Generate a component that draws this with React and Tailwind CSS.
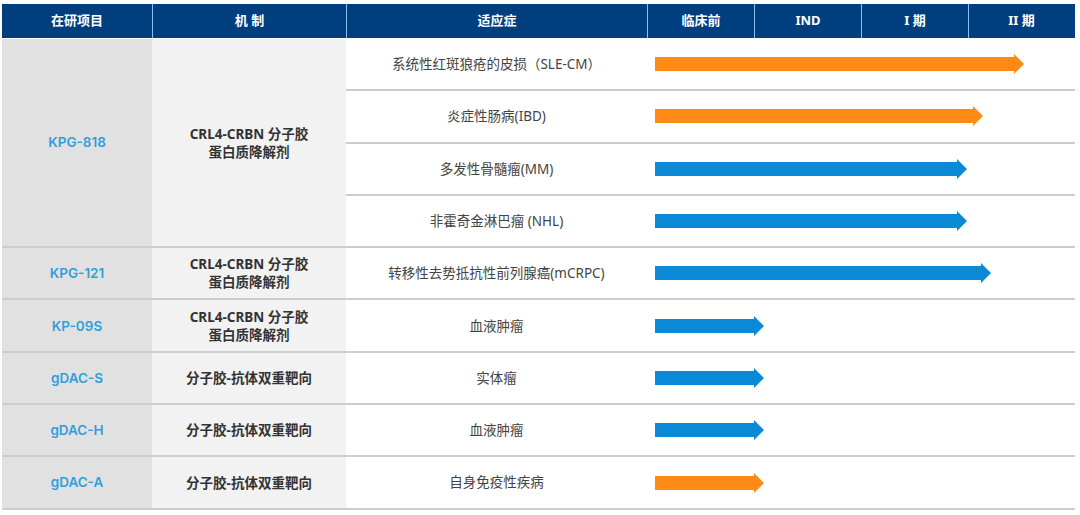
import React from 'react';

const ORANGE = '#fc8a14';
const BLUE = '#0a8ad6';

const rows = [
  { text: '系统性红斑狼疮的皮损（SLE-CM）', len: 369, color: ORANGE },
  { text: '炎症性肠病(IBD)', len: 328, color: ORANGE },
  { text: '多发性骨髓瘤(MM)', len: 312, color: BLUE },
  { text: '非霍奇金淋巴瘤 (NHL)', len: 312, color: BLUE },
  { text: '转移性去势抵抗性前列腺癌(mCRPC)', len: 336, color: BLUE },
  { text: '血液肿瘤', len: 109, color: BLUE },
  { text: '实体瘤', len: 109, color: BLUE },
  { text: '血液肿瘤', len: 109, color: BLUE },
  { text: '自身免疫性疾病', len: 109, color: ORANGE },
];

const projects = [
  { name: 'KPG-818', mech: ['CRL4-CRBN 分子胶', '蛋白质降解剂'], span: 4 },
  { name: 'KPG-121', mech: ['CRL4-CRBN 分子胶', '蛋白质降解剂'], span: 1 },
  { name: 'KP-09S', mech: ['CRL4-CRBN 分子胶', '蛋白质降解剂'], span: 1 },
  { name: 'gDAC-S', mech: ['分子胶-抗体双重靶向'], span: 1 },
  { name: 'gDAC-H', mech: ['分子胶-抗体双重靶向'], span: 1 },
  { name: 'gDAC-A', mech: ['分子胶-抗体双重靶向'], span: 1 },
];

const headers = ['在研项目', '机 制', '适应症', '临床前', 'IND', 'I 期', 'II 期'];

const Arrow = ({ len, color }) => (
  <svg width={len} height="20" viewBox={`0 0 ${len} 20`} className="block">
    <polygon
      points={`0,3 ${len - 10},3 ${len - 10},0 ${len},10 ${len - 10},20 ${len - 10},17 0,17`}
      fill={color}
    />
  </svg>
);

export default function App() {
  let rowStart = 1;

  return (
    <div
      className="w-[1080px] h-[515px] bg-white pt-[4px] pl-[2px] overflow-hidden"
      style={{ fontFamily: '"Noto Sans", "Noto Sans CJK SC", sans-serif' }}
    >
      <div className="grid grid-cols-[150px_194px_301px_107px_107px_107px_106px] w-[1073px] h-[34px] bg-[#003f7f]">
        {headers.map((h, i) => (
          <div
            key={h}
            className={`flex items-center justify-center text-white font-bold text-[13px] ${
              i > 0 ? 'border-l border-[#8cc0ea]' : ''
            }`}
          >
            {h}
          </div>
        ))}
      </div>

      {/* body: two fixed columns + indication/arrow rows */}
      <div className="mt-[1px] grid grid-cols-[150px_194px_729px] grid-rows-[repeat(9,52.3px)] w-[1073px]">
        {projects.map((p) => {
          const start = rowStart;
          rowStart += p.span;
          const rowCls = p.span === 4 ? 'row-span-4' : '';
          return (
            <React.Fragment key={p.name}>
              <div
                className={`col-start-1 ${rowCls} bg-[#e1e1e1] border-b-2 border-[#cdcdcd] flex items-center justify-center text-[13.5px] font-semibold font-[Inter,sans-serif] text-[#2e9fdc]`}
                style={{ gridRowStart: start }}
              >
                {p.name}
              </div>
              <div
                className={`col-start-2 ${rowCls} bg-[#f2f2f2] border-b-2 border-[#cdcdcd] flex flex-col items-center justify-center text-[13.5px] font-bold text-[#333] leading-[18px]`}
                style={{ gridRowStart: start }}
              >
                {p.mech.map((m) => (
                  <span key={m}>{m}</span>
                ))}
              </div>
            </React.Fragment>
          );
        })}
        {rows.map((r, i) => (
          <div
            key={i}
            className="col-start-3 flex items-center border-b-2 border-[#cdcdcd]"
            style={{ gridRowStart: i + 1 }}
          >
            <div className="w-[301px] text-center text-[13.5px] text-[#444]">{r.text}</div>
            <div className="pl-[8px]">
              <Arrow len={r.len} color={r.color} />
            </div>
          </div>
        ))}
      </div>
    </div>
  );
}
